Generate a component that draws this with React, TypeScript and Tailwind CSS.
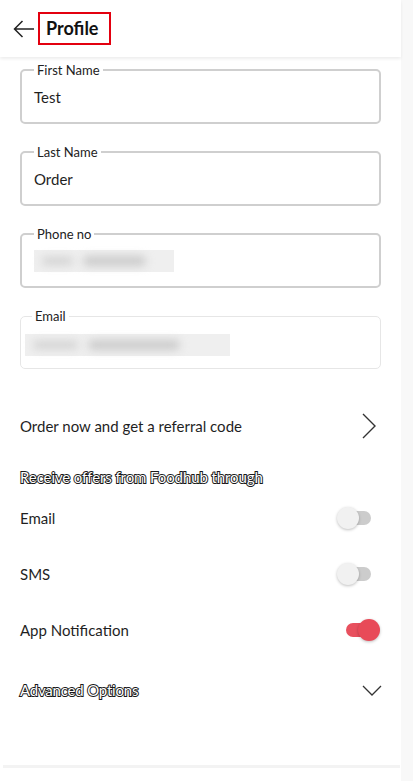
import React from 'react';

function Field({ label, children, disabled }: { label: string; children: React.ReactNode; disabled?: boolean }) {
  return (
    <fieldset
      className={`mx-[20px] rounded-[5px] px-[12px] pb-[6px] ${
        disabled ? 'border border-[#e6e6e6]' : 'border-2 border-[#cfcfcf]'
      }`}
    >
      <legend className={`px-[3px] text-[13px] leading-[16px] text-[#222] ${disabled ? '-ml-[1px]' : 'ml-0'}`}>
        {label}
      </legend>
      <div className="flex h-[38px] items-center text-[15px] text-[#1f1f1f]">{children}</div>
    </fieldset>
  );
}

function Toggle({ on }: { on?: boolean }) {
  if (on) {
    return (
      <div className="mr-[21px] flex h-[22px] w-[34px] items-center">
        <div className="h-[14px] w-[20px] rounded-l-full bg-[#e8505e]" />
        <div className="-ml-[8px] h-[22px] w-[22px] rounded-full bg-[#e84a58] shadow-[0_1px_3px_rgba(0,0,0,0.25)]" />
      </div>
    );
  }
  return (
    <div className="mr-[30px] flex h-[22px] w-[34px] items-center">
      <div className="z-10 h-[22px] w-[22px] rounded-full bg-[#f1f1f1] shadow-[0_1px_3px_rgba(0,0,0,0.25)]" />
      <div className="-ml-[8px] h-[14px] w-[20px] rounded-r-full bg-[#cccccc]" />
    </div>
  );
}

function Blur({ w }: { w: number }) {
  return (
    <div className="flex h-[22px] items-center bg-[#efefef]" style={{ width: w }}>
      <div className="ml-[8px] h-[8px] w-[22%] rounded-full bg-[#d2d2d2] blur-[4px]" />
      <div className="ml-[10px] h-[10px] w-[45%] rounded-full bg-[#cbcbcb] blur-[4px]" />
    </div>
  );
}

export default function App() {
  return (
    <div className="min-h-[781px] bg-[#f8f8f8] font-['Lato','Noto_Sans',sans-serif] text-[#1f1f1f]">
      <div className="min-h-[781px] w-[401px] bg-white">
        {/* Header */}
        <header className="flex h-[57px] items-center shadow-[0_2px_3px_rgba(0,0,0,0.07)]">
          <svg width="22" height="18" viewBox="0 0 22 18" className="ml-[13px]" fill="none" stroke="#222" strokeWidth="1.5">
            <path d="M21 9H1.5M9.5 1L1.5 9l8 8" />
          </svg>
          <div className="ml-[3px] flex h-[33px] w-[73px] items-center border-2 border-[#e3000f] pl-[6px]">
            <span className="text-[18px] font-bold text-[#111]">Profile</span>
          </div>
        </header>

        {/* Form */}
        <div className="mt-[5px] flex flex-col gap-[20px]">
          <Field label="First Name">Test</Field>
          <Field label="Last Name">Order</Field>
          <Field label="Phone no">
            <Blur w={140} />
          </Field>
          <Field label="Email" disabled>
            <div className="-ml-[8px] mt-[4px]">
              <Blur w={205} />
            </div>
          </Field>
        </div>

        {/* Referral */}
        <div className="mt-[29px] flex h-[56px] items-center justify-between pl-[20px]">
          <span className="text-[15px]">Order now and get a referral code</span>
          <svg width="14" height="26" viewBox="0 0 14 26" className="mr-[25px]" fill="none" stroke="#333" strokeWidth="1.4">
            <path d="M1 1l12 12L1 25" />
          </svg>
        </div>

        <div className="mt-[10px] h-[26px] pl-[20px] text-[15px] leading-[26px] text-white [-webkit-text-stroke:2px_#1a1a1a] [paint-order:stroke_fill] tracking-[-0.1px]">
          Receive offers from Foodhub through
        </div>

        {[
          { name: 'Email', on: false },
          { name: 'SMS', on: false },
          { name: 'App Notification', on: true },
        ].map((r) => (
          <div key={r.name} className="flex h-[56px] items-center justify-between pl-[20px]">
            <span className="text-[15px]">{r.name}</span>
            <Toggle on={r.on} />
          </div>
        ))}

        <div className="mt-[4px] flex h-[56px] items-center justify-between pl-[20px]">
          <span className="text-[15px] text-white [-webkit-text-stroke:2px_#1a1a1a] [paint-order:stroke_fill] tracking-[-0.2px]">
            Advanced Options
          </span>
          <svg width="20" height="11" viewBox="0 0 20 11" className="mr-[19px]" fill="none" stroke="#333" strokeWidth="1.3">
            <path d="M1 1l9 9 9-9" />
          </svg>
        </div>

        <div className="mt-[47px] ml-[3px] h-[3px] w-[397px] bg-[#f3f3f3]" />
      </div>
    </div>
  );
}
